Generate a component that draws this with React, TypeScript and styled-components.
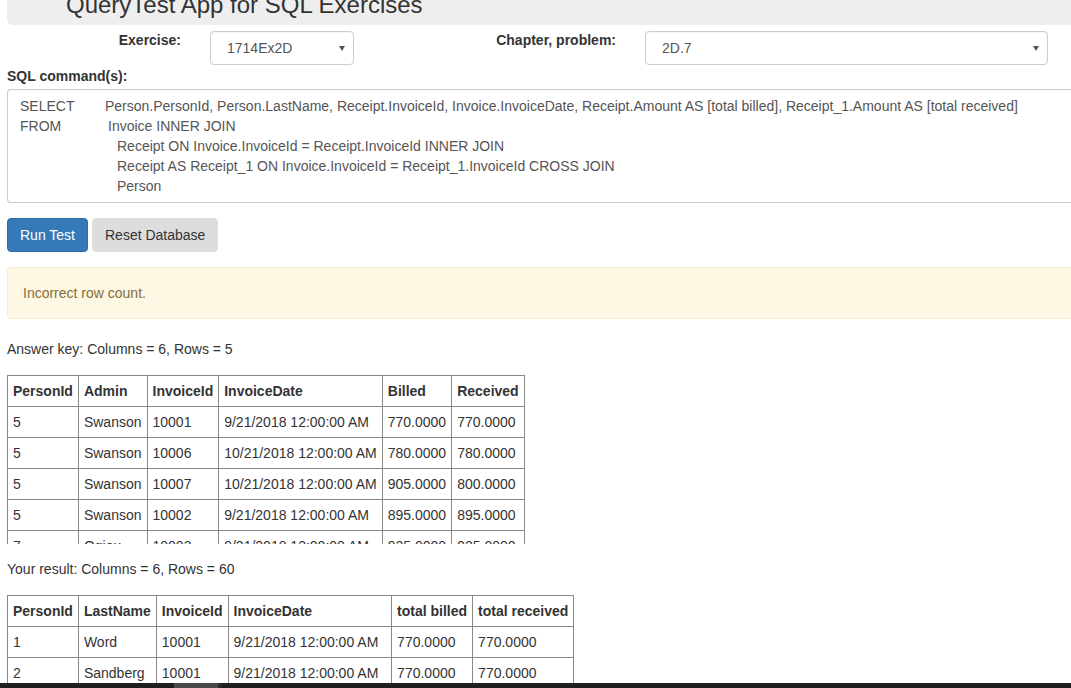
import * as React from 'react';
import styled, { createGlobalStyle } from 'styled-components';

const GlobalStyle = createGlobalStyle`
    html, body {
        margin: 0;
        padding: 0;
        overflow: hidden;
        background: #fff;
    }
    body {
        font-family: "Liberation Sans", Arial, sans-serif;
        font-size: 14px;
        line-height: 20px;
        color: #333;
    }
`;

const Page = styled.div`
    width: 1120px;
    padding-left: 7px;
    box-sizing: border-box;
`;

const Header = styled.div`
    height: 25px;
    background: #eee;
    border-bottom-left-radius: 6px;
    padding-left: 59px;
    overflow: hidden;
`;

const Title = styled.h1`
    margin: -7px 0 0 0;
    font-size: 24px;
    line-height: 24px;
    font-weight: 400;
    color: #333;
`;

const FormRow = styled.div`
    display: flex;
    align-items: flex-start;
    margin-top: 5px;
`;

const FieldLabel = styled.label<{ $width: number }>`
    width: ${p => p.$width}px;
    text-align: right;
    font-weight: bold;
    flex-shrink: 0;
`;

const SelectBox = styled.div<{ $width: number }>`
    position: relative;
    margin-left: 29px;
    width: ${p => p.$width}px;
    height: 34px;
    box-sizing: border-box;
    border: 1px solid #ccc;
    border-radius: 4px;
    padding: 8px 16px;
    color: #555;
    line-height: 16px;
    margin-top: 1px;
    box-shadow: inset 0 1px 1px rgba(0, 0, 0, 0.04);
`;

const Caret = styled.span`
    position: absolute;
    right: 8px;
    top: 14px;
    border-left: 3.5px solid transparent;
    border-right: 3.5px solid transparent;
    border-top: 5px solid #555;
`;

const SectionLabel = styled.div`
    font-weight: bold;
    margin-top: 1px;
`;

const SqlBox = styled.div`
    margin-top: 3px;
    border: 1px solid #ccc;
    border-right: none;
    border-radius: 4px 0 0 4px;
    padding: 6px 12px;
    color: #555;
    white-space: pre;
`;

const SqlLine = styled.div<{ $indent?: number }>`
    padding-left: ${p => p.$indent || 0}px;
`;

const Keyword = styled.span<{ $width: number }>`
    display: inline-block;
    width: ${p => p.$width}px;
`;

const ButtonRow = styled.div`
    display: flex;
    gap: 4px;
    margin-top: 15px;
`;

const Button = styled.button<{ $primary?: boolean }>`
    font-family: inherit;
    font-size: 14px;
    line-height: 20px;
    padding: 6px 12px;
    border-radius: 4px;
    border: 1px solid ${p => (p.$primary ? '#2e6da4' : '#ddd')};
    background: ${p => (p.$primary ? '#337ab7' : '#ddd')};
    color: ${p => (p.$primary ? '#fff' : '#333')};
    cursor: pointer;
`;

const Alert = styled.div`
    margin-top: 15px;
    padding: 15px;
    background: #fcf8e3;
    border: 1px solid #faebcc;
    border-right: none;
    border-radius: 4px 0 0 4px;
    color: #8a6d3b;
`;

const Caption = styled.div<{ $top: number }>`
    margin-top: ${p => p.$top}px;
`;

const TableScroll = styled.div<{ $maxHeight?: number }>`
    margin-top: 16px;
    max-height: ${p => (p.$maxHeight ? p.$maxHeight + 'px' : 'none')};
    overflow: hidden;
`;

const DataTable = styled.table`
    border-collapse: collapse;

    th, td {
        border: 1px solid #888;
        padding: 5px;
        text-align: left;
        white-space: nowrap;
        vertical-align: top;
    }

    th {
        font-weight: bold;
    }
`;

const ScrollTrack = styled.div`
    position: fixed;
    left: 0;
    right: 0;
    bottom: 0;
    height: 5px;
    background: #1f1f1f;
`;

const ScrollThumb = styled.div`
    position: absolute;
    left: 174px;
    top: 0;
    width: 44px;
    height: 5px;
    background: #4a4a4a;
    border-right: 4px solid #2a2a2a;
`;

const answerCols = ['PersonId', 'Admin', 'InvoiceId', 'InvoiceDate', 'Billed', 'Received'];
const answerRows = [
    ['5', 'Swanson', '10001', '9/21/2018 12:00:00 AM', '770.0000', '770.0000'],
    ['5', 'Swanson', '10006', '10/21/2018 12:00:00 AM', '780.0000', '780.0000'],
    ['5', 'Swanson', '10007', '10/21/2018 12:00:00 AM', '905.0000', '800.0000'],
    ['5', 'Swanson', '10002', '9/21/2018 12:00:00 AM', '895.0000', '895.0000'],
    ['7', 'Ogiou', '10003', '9/21/2018 12:00:00 AM', '925.0000', '925.0000'],
];

// only the first two rows are in view; the rest set the column widths
const resultCols = ['PersonId', 'LastName', 'InvoiceId', 'InvoiceDate', 'total billed', 'total received'];
const resultRows = [
    ['1', 'Word', '10001', '9/21/2018 12:00:00 AM', '770.0000', '770.0000'],
    ['2', 'Sandberg', '10001', '9/21/2018 12:00:00 AM', '770.0000', '770.0000'],
    ['3', 'Swift', '10001', '9/21/2018 12:00:00 AM', '770.0000', '770.0000'],
    ['1', 'Word', '10006', '10/21/2018 12:00:00 AM', '780.0000', '780.0000'],
];

function ResultTable({ cols, rows }: { cols: string[]; rows: string[][] }) {
    return (
        <DataTable>
            <thead>
                <tr>
                    {cols.map(c => <th key={c}>{c}</th>)}
                </tr>
            </thead>
            <tbody>
                {rows.map((r, i) =>
                    <tr key={i}>
                        {r.map((v, j) => <td key={j}>{v}</td>)}
                    </tr>
                )}
            </tbody>
        </DataTable>
    );
}

export default function App() {
    return (
        <>
            <GlobalStyle />
            <Page>
                <Header>
                    <Title>QueryTest App for SQL Exercises</Title>
                </Header>
                <FormRow>
                    <FieldLabel $width={174}>Exercise:</FieldLabel>
                    <SelectBox $width={144}>1714Ex2D<Caret /></SelectBox>
                    <FieldLabel $width={262}>Chapter, problem:</FieldLabel>
                    <SelectBox $width={403}>2D.7<Caret /></SelectBox>
                </FormRow>
                <SectionLabel>SQL command(s):</SectionLabel>
                <SqlBox>
                    <SqlLine><Keyword $width={85}>SELECT</Keyword>Person.PersonId, Person.LastName, Receipt.InvoiceId, Invoice.InvoiceDate, Receipt.Amount AS [total billed], Receipt_1.Amount AS [total received]</SqlLine>
                    <SqlLine><Keyword $width={88}>FROM</Keyword>Invoice INNER JOIN</SqlLine>
                    <SqlLine $indent={97}>Receipt ON Invoice.InvoiceId = Receipt.InvoiceId INNER JOIN</SqlLine>
                    <SqlLine $indent={97}>Receipt AS Receipt_1 ON Invoice.InvoiceId = Receipt_1.InvoiceId CROSS JOIN</SqlLine>
                    <SqlLine $indent={97}>Person</SqlLine>
                </SqlBox>
                <ButtonRow>
                    <Button $primary>Run Test</Button>
                    <Button>Reset Database</Button>
                </ButtonRow>
                <Alert>Incorrect row count.</Alert>
                <Caption $top={20}>Answer key: Columns = 6, Rows = 5</Caption>
                <TableScroll $maxHeight={169}>
                    <ResultTable cols={answerCols} rows={answerRows} />
                </TableScroll>
                <Caption $top={15}>Your result: Columns = 6, Rows = 60</Caption>
                <TableScroll>
                    <ResultTable cols={resultCols} rows={resultRows} />
                </TableScroll>
            </Page>
            <ScrollTrack>
                <ScrollThumb />
            </ScrollTrack>
        </>
    );
}
